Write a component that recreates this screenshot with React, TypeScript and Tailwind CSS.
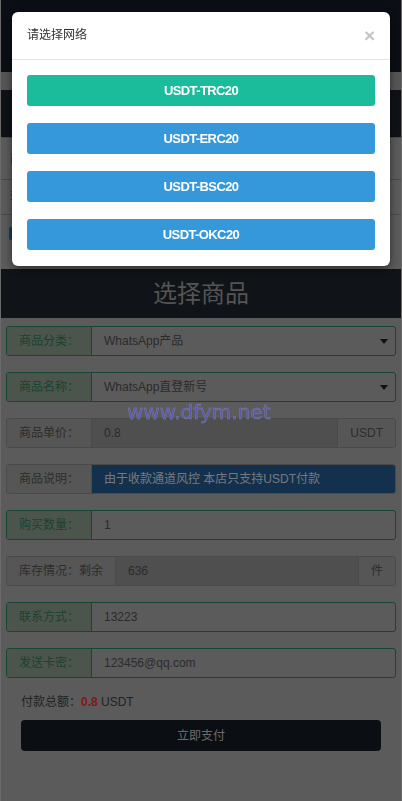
import type { ReactNode } from "react";

const FONT = "font-['Liberation_Sans','Noto_Sans_CJK_SC',sans-serif]";

const NETWORKS = [
  { name: "USDT-TRC20", color: "bg-[#1abc9c]" },
  { name: "USDT-ERC20", color: "bg-[#3498db]" },
  { name: "USDT-BSC20", color: "bg-[#3498db]" },
  { name: "USDT-OKC20", color: "bg-[#3498db]" },
];

type Tone = "green" | "gray";

function Caret() {
  return (
    <svg width="8" height="5" viewBox="0 0 8 5" className="shrink-0">
      <path d="M0 0h8L4 5z" fill="#222" />
    </svg>
  );
}

function Group({
  label,
  tone,
  labelW = "w-[85px]",
  children,
  addon,
  inputCls = "",
  select = false,
}: {
  label: string;
  tone: Tone;
  labelW?: string;
  children: ReactNode;
  addon?: string;
  inputCls?: string;
  select?: boolean;
}) {
  const green = tone === "green";
  return (
    <div
      className={[
        "flex h-[30px] overflow-hidden rounded-[3px] border text-[12px]",
        green ? "border-[#2f8a6c]" : "border-[#949494]",
      ].join(" ")}
    >
      <div
        className={[
          "flex shrink-0 items-center border-r pl-[12px] whitespace-nowrap",
          labelW,
          green
            ? "border-[#2f8a6c] bg-[#98aa98] text-[#37855e]"
            : "border-[#949494] bg-[#acacac] text-[#5a5a5a]",
        ].join(" ")}
      >
        {label}
      </div>
      <div
        className={[
          "flex min-w-0 flex-1 items-center justify-between pl-[12px] pr-[7px] text-[#565656]",
          inputCls,
        ].join(" ")}
      >
        <span className="truncate">{children}</span>
        {select ? <Caret /> : null}
      </div>
      {addon ? (
        <div className="flex shrink-0 items-center border-l border-[#949494] bg-[#acacac] px-[12px] text-[#5a5a5a]">
          {addon}
        </div>
      ) : null}
    </div>
  );
}

export default function App() {
  return (
    <div className={`relative min-h-screen ${FONT}`}>
      {/* page under the backdrop */}
      <div className="min-h-screen border-x border-[#d4d4d4] bg-[#b6b6b6]">
        <div className="h-[72px] bg-[#161c28]" />
        <div className="h-[18px] bg-[#aaaaaa]" />
        <div className="h-[47px] bg-[#1c222c]" />
        <div className="flex h-[43px] items-center border-y border-[#949494] px-[9px] text-[13px] text-[#444]">
          商品公告
        </div>
        <div className="flex h-[35px] items-center border-b border-[#949494] px-[9px] text-[13px] text-[#444]">
          套餐说明
        </div>
        <div className="h-[54px] px-[8px] pt-[12px]">
          <div className="h-[13px] w-[40px] rounded-[2px] bg-[#3474c0]" />
        </div>

        <div className="flex h-[49px] items-center justify-center bg-[#20262e] text-[24px] text-[#a8a8a8]">
          选择商品
        </div>

        <div className="flex flex-col gap-[16px] px-[5px] pt-[8px]">
          <Group label="商品分类：" tone="green" select>
            WhatsApp产品
          </Group>
          <Group label="商品名称：" tone="green" select>
            WhatsApp直登新号
          </Group>
          <Group label="商品单价：" tone="gray" addon="USDT" inputCls="bg-[#9e9e9e]">
            0.8
          </Group>
          <Group label="商品说明：" tone="gray" inputCls="bg-[#266098] !text-[#e8f0ff]">
            由于收款通道风控 本店只支持USDT付款
          </Group>
          <Group label="购买数量：" tone="green">
            1
          </Group>
          <Group label="库存情况：剩余" tone="gray" labelW="w-[109px]" addon="件" inputCls="bg-[#9e9e9e]">
            636
          </Group>
          <Group label="联系方式：" tone="green">
            13223
          </Group>
          <Group label="发送卡密：" tone="green">
            123456@qq.com
          </Group>
        </div>

        <div className="px-[20px]">
          <div className="mt-[16px] h-[17px] text-[12px] leading-[17px] text-[#444]">
            付款总额：<span className="font-bold text-[#ff3434]">0.8</span> USDT
          </div>
          <button className="mt-[9px] h-[31px] w-full rounded-[4px] bg-[#161c26] text-[12px] text-[#d8d8d8]">
            立即支付
          </button>
        </div>
      </div>

      {/* backdrop */}
      <div className="fixed inset-0 z-10 bg-black/50" />

      {/* network dialog */}
      <div className="fixed left-[12px] right-[12px] top-[12px] z-20 rounded-[6px] bg-white shadow-[0_3px_9px_rgba(0,0,0,0.5)]">
        <div className="flex items-center justify-between border-b border-[#e5e5e5] px-[15px] py-[15px]">
          <span className="text-[12px] leading-[17px] text-[#333]">请选择网络</span>
          <span className="text-[19px] font-bold leading-[17px] text-[#c4c4c4]">×</span>
        </div>
        <div className="flex flex-col gap-[17px] px-[15px] pb-[16px] pt-[15px]">
          {NETWORKS.map((n) => (
            <button
              key={n.name}
              className={`h-[31px] w-full rounded-[3px] text-[13px] font-bold tracking-[-0.6px] text-white ${n.color}`}
            >
              {n.name}
            </button>
          ))}
        </div>
      </div>

      {/* watermark */}
      <div className="absolute left-[127px] top-[400px] z-30 font-['DejaVu_Sans',sans-serif] text-[20px] leading-[24px] text-[#5a5aa2] [-webkit-text-stroke:0.4px_#8080bc]">
        www.dfym.net
      </div>
    </div>
  );
}
